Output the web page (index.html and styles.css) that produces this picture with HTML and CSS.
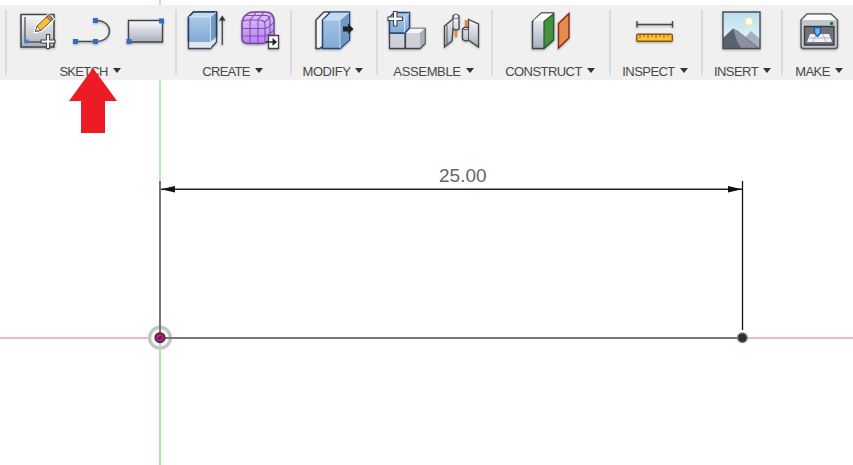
FILE: index.html
```html
<!DOCTYPE html>
<html lang="en">
<head>
<meta charset="utf-8">
<title>Sketch</title>
<link rel="stylesheet" href="styles.css">
</head>
<body>
<svg class="canvas" viewBox="0 0 853 465">
  <path d="M160 0V338" stroke="#b5efb5" stroke-width="2"/>
  <path d="M0 338H149M742 338H853" stroke="#f5b8b8" stroke-width="2"/>
  <circle cx="160" cy="337.700" r="10.500" fill="#f4f4f4" fill-opacity=".9" stroke="#c3c3c3" stroke-width="3.200"/>
  <path d="M160 338V465" stroke="#a9e5a9" stroke-width="2"/>
  <path d="M160 338H742" stroke="#777" stroke-width="2"/>
  <path d="M160 181V338" stroke="#777" stroke-width="2"/>
  <path d="M742.500 181V330" stroke="#111" stroke-width="1.300"/>
  <path d="M161 189.300H742" stroke="#222" stroke-width="1.400"/>
  <path d="M161 189.300L175 186V192.500ZM742 189.300L728 186V192.500Z" fill="#111"/>
  <circle cx="160" cy="337.700" r="4.800" fill="#b01c86" stroke="#43233b" stroke-width="1.500"/>
  <path d="M158.800 338.700L161.200 336.700" stroke="#451035" stroke-width="1.800"/>
  <circle cx="742.400" cy="337.700" r="5.500" fill="#888"/>
  <circle cx="742.400" cy="337.700" r="4.300" fill="#2f2f2f"/>
  <text class="dimension" x="439" y="182">25.00</text>
</svg>
<header class="toolbar">
  <section class="group">
    <div class="icons">
      <svg viewBox="9 8 54 44" width="54" height="44">
        <defs>
          <linearGradient id="steel" x2="0" y2="1"><stop stop-color="#f8f9fc"/><stop offset="1" stop-color="#a8afbd"/></linearGradient>
          <linearGradient id="blue" x2="0" y2="1"><stop stop-color="#abc9e7"/><stop offset="1" stop-color="#83aad6"/></linearGradient>
          <linearGradient id="purple" x2="0" y2="1"><stop stop-color="#dfc6fa"/><stop offset="1" stop-color="#ba80f4"/></linearGradient>
        </defs>
        <path d="M21 14.500H54V47H21Z" fill="url(#steel)" stroke="#444" stroke-width="1.500"/>
        <path d="M25 17V42H42" fill="none" stroke="#555" stroke-width="1.300"/>
        <path d="M24.500 39.500h4v4h-4z" fill="#3b83d4"/>
        <path d="M35.500 31.500L37 26L48.500 15L53 19L41 30.500Z" fill="#f6c338" stroke="#fff" stroke-width="3"/>
        <path d="M35.500 31.500L37 26L48.500 15L53 19L41 30.500Z" fill="#f6c338" stroke="#66501e"/>
        <path d="M46.500 17L49 14.500L53 18.500L50.500 21Z" fill="#b0805f" stroke="#6b4936" stroke-width=".7"/>
        <path d="M35.500 31.500L37 26L40.500 30Z" fill="#fff3db" stroke="#444" stroke-width=".7"/>
        <path d="M46.500 34.500h3v5.500h5.500v3h-5.500v5.500h-3v-5.500H41v-3h5.500z" fill="#fff" stroke="#444" stroke-width="1.100"/>
      </svg>
      <svg viewBox="63 8 54 44" width="54" height="44">
        <path d="M75.500 41.500H96C114 41.500 114 20.500 96 20.500" fill="none" stroke="#505050" stroke-width="1.400"/>
        <path d="M73 39h5v5h-5zM93 39h5v5h-5zM93 18h5v5h-5z" fill="#3569cb"/>
      </svg>
      <svg viewBox="117 8 54 44" width="54" height="44">
        <path d="M128.500 20.500H162.500V42H128.500Z" fill="url(#steel)" stroke="#444" stroke-width="1.400"/>
        <path d="M126.500 39h5v5h-5zM159 18.500h5v5h-5z" fill="#3569cb"/>
      </svg>
    </div>
    <div class="label tight">SKETCH<i></i></div>
  </section>
  <section class="group">
    <div class="icons">
      <svg viewBox="179 8 54 44" width="54" height="44">
        <path d="M188.500 17L193.500 12H216.500V42L210.500 48.500H188.500Z" fill="#e4e7ed" stroke="#414954" stroke-width="1.400" stroke-linejoin="round"/>
        <path d="M188.500 17H210.500V42H188.500Z" fill="url(#blue)"/>
        <path d="M188.500 17L193.500 12H216.500L210.500 17Z" fill="#c4d9ed"/>
        <path d="M210.500 17L216.500 12V37L210.500 42Z" fill="#739bc5"/>
        <path d="M188.500 42V17L193.500 12H216.500V37" fill="none" stroke="#243e67" stroke-width="1.500"/>
        <path d="M188.500 17H210.500V48M210.500 17L216 12" fill="none" stroke="#d8eafa" stroke-width=".8"/>
        <path d="M222.300 45V19" stroke="#444" stroke-width="1.300"/><path d="M219 20.500L222.300 15.500L225.500 20.500Z" fill="#333"/>
      </svg>
      <svg viewBox="233 8 53 44" width="53" height="44">
        <path d="M242 23Q242 18 247 14Q249.500 12 254 12H265Q274 12 274 21V34Q274 37 270 40Q266 43.500 261 43.500H248Q242 43.500 242 38Z" fill="url(#purple)" stroke="#7343a0" stroke-width="1.500"/>
        <path d="M242.500 22Q243.500 20 248 20H259Q264.500 20 265 24V43M250 20V43M258 20V43M242 28.500H265Q270 27 274 22M242 36H265Q270 34.500 274 30M264.500 22Q268 20 271 15.500M246 15.500H267Q270 17 270 21V39M250 20L256.500 12M258 20L264 12" fill="none" stroke="#7d4fab" stroke-width="1.100"/>
        <path d="M268.500 35.500h10v13h-10z" fill="#fff" stroke="#444" stroke-width="1.300"/>
        <path d="M266 42H273" stroke="#333" stroke-width="1.500"/><path d="M272.500 38L277 42L272.500 46Z" fill="#222"/>
      </svg>
    </div>
    <div class="label tight">CREATE<i></i></div>
  </section>
  <section class="group">
    <div class="icons">
      <svg viewBox="306 8 54 44" width="54" height="44">
        <path d="M316 20L324 12H329V40L320 48.500H316Z" fill="#f4f5f7" stroke="#474747" stroke-width="1.500"/>
        <path d="M322.500 20L330.500 12H349.500V40L340 48.500H322.500Z" fill="url(#blue)" stroke="#244675" stroke-width="1.500"/>
        <path d="M323.500 20L331 12.800H348.500L340 20Z" fill="#c5d9ed"/><path d="M340 20L348.800 13V40L340 48Z" fill="#6f98c4"/>
        <path d="M323 20H340V48M340 20L349 12.500" fill="none" stroke="#d6e7f8" stroke-width=".8"/>
        <path d="M343 26.500H348V23.500L353.500 29L348 34V31.500H343Z" fill="#222"/>
      </svg>
    </div>
    <div class="label modify">MODIFY<i></i></div>
  </section>
  <section class="group">
    <div class="icons">
      <svg viewBox="380 8 54 44" width="54" height="44">
        <path d="M389.500 33H405V48.500H389.500ZM405.500 33L410 28.500H425V43.500L420 48.500H405.500Z" fill="#ced1d9" stroke="#444" stroke-width="1.300"/>
        <path d="M405.500 33L410 28.500H425L420 33Z" fill="#f6f7fa"/><path d="M420 33L424.500 28.500V43L420 48Z" fill="#a8aeba"/>
        <path d="M389.500 17.500L394.500 12.500H409.500V28L405 33H389.500Z" fill="url(#blue)" stroke="#244675" stroke-width="1.500"/>
        <path d="M390 17H404.500V32.500M404.500 17L409 13" fill="none" stroke="#c8dff4"/>
        <path d="M393.500 11.500h3.500V17h5.500v3.500H397v5.500h-3.500v-5.500H388V17h5.500z" fill="#fff" stroke="#444" stroke-width="1.100"/>
      </svg>
      <svg viewBox="434 8 53 44" width="53" height="44">
        <path d="M456 28V37M466 20V30" stroke="#f58526" stroke-width="2.300"/>
        <path d="M444.500 26L453 19V16Q455.500 13 459 16V29Q456 31 453 28.500L452 41L444.500 47Z" fill="url(#steel)" stroke="#444" stroke-width="1.300"/>
        <path d="M453 18V29M447 25V45" stroke="#5b5b5b"/><circle cx="456" cy="16.500" r="2.300" fill="#fff" stroke="#555" stroke-width=".8"/>
        <path d="M468.500 19.500L478.500 24V47L468.500 40Q465 42 462.500 39V29Q465 26 468.500 28Z" fill="url(#steel)" stroke="#444" stroke-width="1.300"/>
        <path d="M468.500 28V40M463 29Q466 31 468.500 29" fill="none" stroke="#555"/>
      </svg>
    </div>
    <div class="label assemble">ASSEMBLE<i></i></div>
  </section>
  <section class="group">
    <div class="icons">
      <svg viewBox="523 8 54 44" width="54" height="44">
        <path d="M532.500 21.500L541.500 13H553.500V40L544 48.500H532.500Z" fill="url(#steel)" stroke="#444" stroke-width="1.500"/>
        <path d="M533 21L541.500 13.500H553L544 21Z" fill="#fafafa"/>
        <path d="M544 21.500L553.500 14V40L544 48Z" fill="#44923d" stroke="#29592d" stroke-width="1.200"/>
        <path d="M558.500 23.500L569 13.500V38L558.500 48Z" fill="#e88a50" stroke="#812e15" stroke-width="1.400"/>
      </svg>
    </div>
    <div class="label">CONSTRUCT<i></i></div>
  </section>
  <section class="group">
    <div class="icons">
      <svg viewBox="628 8 54 44" width="54" height="44">
        <path d="M637 24.500H672.500M637 21V27.500M672.500 21V27.500" fill="none" stroke="#444" stroke-width="1.400"/>
        <rect x="636.800" y="34.300" width="35.500" height="7" rx="1" fill="#f7c535" stroke="#8e5611" stroke-width="1.400"/>
        <path d="M640 35V38M644 35V37M648 35V38M652 35V37M656 35V38M660 35V37M664 35V38M668 35V37" stroke="#8b5a12" stroke-width=".9"/>
      </svg>
    </div>
    <div class="label">INSPECT<i></i></div>
  </section>
  <section class="group">
    <div class="icons">
      <svg viewBox="714 8 54 44" width="54" height="44">
        <defs><linearGradient id="sky" x2="0" y2="1"><stop stop-color="#b8def0"/><stop offset="1" stop-color="#eef9fc"/></linearGradient></defs>
        <path d="M723 12H760V48.500H723Z" fill="url(#sky)"/>
        <path d="M741 42L751 31L760 39V48H744Z" fill="#a4b1bf"/>
        <path d="M723 38L733 28.500L738 31L759 48H723Z" fill="#5b6171"/><path d="M733 28.500L738 31L758 48H741L737 41Z" fill="#8c919f"/>
        <rect x="745.500" y="18" width="7" height="7" rx="2" fill="#fffdee" stroke="#fbe3a0" stroke-width="1.200"/>
        <path d="M723 12H760V48.500H723Z" fill="none" stroke="#484d54" stroke-width="1.400"/>
      </svg>
    </div>
    <div class="label insert">INSERT<i></i></div>
  </section>
  <section class="group">
    <div class="icons">
      <svg viewBox="792 8 54 44" width="54" height="44">
        <path d="M801 20L807 14H831L837.500 20V46Q837.500 48.500 835 48.500H803.500Q801 48.500 801 46Z" fill="#c4c6cd" stroke="#555961" stroke-width="1.400"/>
        <path d="M802 20L807.500 14.800H830.500L836.500 20Z" fill="#fafafa"/>
        <path d="M804.500 26.500H834V45H804.500Z" fill="#6d717a" stroke="#383b43" stroke-width="1.300"/>
        <path d="M810 34H829L832 42H807Z" fill="#eef0f3"/><path d="M809 38H830M816 34L813 42M823 34L826 42" stroke="#9da2ac" stroke-width=".7"/>
        <path d="M814.500 27.500H820.500V33L817.500 36.500L814.500 33Z" fill="#69b7f2" stroke="#1f579e" stroke-width="1.300"/>
        <path d="M830 22h3v3h-3z" fill="#168022"/>
      </svg>
    </div>
    <div class="label">MAKE<i></i></div>
  </section>
</header>
<svg class="pointer" viewBox="0 0 48 65"><path d="M24 0L48 33H36V65H12V33H0Z" fill="#ed1c24"/></svg>
</body>
</html>
```
FILE: styles.css
```css
body {
  margin: 0;
  height: 465px;
  overflow: hidden;
  position: relative;
  background: #fff;
  font-family: "Liberation Sans", Arial, sans-serif;
}
.canvas {
  position: absolute;
  inset: 0;
  width: 853px;
  height: 465px;
}
.dimension {
  font-size: 19px;
  fill: #666;
}
.toolbar {
  position: relative;
  display: grid;
  grid-template-columns: 170px 115px 86px 115px 118px 92px 80px 76px;
  height: 75px;
  margin-top: 5px;
  padding-left: 5px;
  overflow: hidden;
  background: #f0f0f0;
}
body::before {
  content: "";
  display: table;
}
.group {
  padding-top: 3px;
  background: linear-gradient(#dcdcdc, #dcdcdc) 0 5px / 2px 65px no-repeat;
}
.icons {
  display: flex;
  justify-content: center;
  height: 44px;
}
.icons svg {
  filter: drop-shadow(0 1px 1px rgba(0, 0, 0, .3));
}
.label {
  display: flex;
  justify-content: center;
  align-items: center;
  height: 15px;
  margin-top: 12px;
  font-size: 13px;
  letter-spacing: -.55px;
  color: #484848;
}
.tight {
  letter-spacing: -.75px;
}
.modify {
  letter-spacing: -.45px;
}
.assemble {
  letter-spacing: -.35px;
}
.insert {
  padding-left: 3px;
}
.label i {
  margin: -2px 0 0 5px;
  border: solid transparent;
  border-width: 5px 4px 0;
  border-top-color: #333;
}
.pointer {
  position: absolute;
  left: 69px;
  top: 68px;
  width: 48px;
  height: 65px;
}
```
